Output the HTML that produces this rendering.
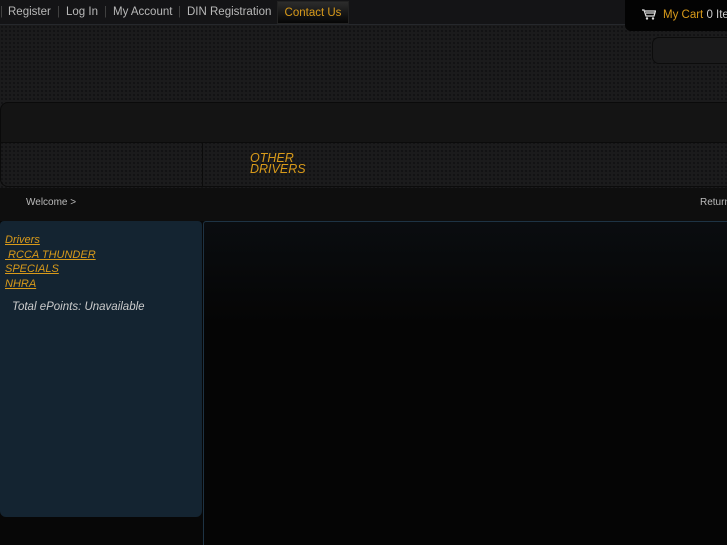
<!DOCTYPE html>
<html><head><style>
*{margin:0;padding:0;box-sizing:border-box}
html,body{width:727px;height:545px;overflow:hidden}
body{background:#070707;font-family:"Liberation Sans",sans-serif;position:relative}
.top{position:absolute;left:0;top:0;width:727px;height:25px;background:#141416;border-bottom:1px solid #26282c}
.nav{position:absolute;left:0;top:0;height:23px;font-size:11.5px;color:#b8b8b8;line-height:24px}
.nav span{position:absolute;white-space:nowrap}
.sep{color:#444}
.contact{position:absolute;left:277px;top:1px;width:72px;height:23px;background:linear-gradient(#2c2c2c,#050505);color:#d89a1a;font-size:11.5px;line-height:22px;text-align:center;border:1px solid #222}
.hdr{position:absolute;left:0;top:25px;width:727px;height:165px;background-color:#1b1b1c;background-image:radial-gradient(#121213 1px,transparent 1.2px);background-size:4px 4px}
.cart{position:absolute;left:625px;top:0;width:102px;height:31px;background:#030303;border-radius:0 0 0 6px;font-size:11.5px;line-height:30px;color:#d89a1a;padding-left:38px;white-space:nowrap;overflow:hidden}
.search{position:absolute;left:652px;top:37px;width:75px;height:27px;border:1px solid #0c0c0c;border-right:none;border-radius:7px 0 0 7px;background:#1a1a1b}
.bar1{position:absolute;left:0;top:102px;width:727px;height:41px;background:#141414;border:1px solid #0a0a0a;border-right:none;border-radius:8px 0 0 0}
.bar2{position:absolute;left:0;top:142px;width:727px;height:45px;border:1px solid #0b0b0b;border-right:none;border-radius:0 0 0 8px}
.vdiv{position:absolute;left:202px;top:142px;width:1px;height:45px;background:#0b0b0b}
.od{position:absolute;left:250px;top:153px;color:#d89a1a;font-size:12.5px;font-style:italic;line-height:11px}
.strip{position:absolute;left:0;top:188px;width:727px;height:33px;background:#0e0e0e;font-size:10px;color:#bbb;overflow:hidden}
.side{position:absolute;left:0;top:221px;width:202px;height:296px;background:#142431;border-radius:4px 4px 6px 6px}
.side a{display:block;color:#d89a1a;font-size:11px;font-style:italic;text-decoration:underline;line-height:14.5px;margin-left:5px}
.main{position:absolute;left:203px;top:221px;width:524px;height:324px;border:1px solid #1e3344;border-right:none;border-bottom:none;border-radius:3px 0 0 0;background:linear-gradient(#0a0d10 0px,#050505 100px)}
</style></head><body>
<div class="hdr"></div>
<div class="top"></div>
<div class="nav">
<span class="sep" style="left:0">|</span><span style="left:8px">Register</span>
<span class="sep" style="left:57px">|</span><span style="left:66px">Log In</span>
<span class="sep" style="left:104px">|</span><span style="left:113px">My Account</span>
<span class="sep" style="left:178px">|</span><span style="left:187px">DIN Registration</span>
</div>
<div class="contact">Contact Us</div>
<div class="cart"><svg style="position:absolute;left:17px;top:9px" width="14" height="11" viewBox="0 0 14 11"><path d="M0 1h2l2 6h8l1.5-5H3M4 4h9" fill="none" stroke="#ddd" stroke-width="1.3"/><circle cx="5" cy="9.5" r="1.2" fill="#ddd"/><circle cx="11" cy="9.5" r="1.2" fill="#ddd"/></svg>My Cart <span style="color:#ccc">0 Items</span></div>
<div class="search"></div>
<div class="bar1"></div>
<div class="bar2"></div>
<div class="vdiv"></div>
<div class="od">OTHER<br>DRIVERS</div>
<div class="strip"><span style="position:absolute;left:26px;top:9px">Welcome &gt;</span><span style="position:absolute;left:700px;top:9px;white-space:nowrap">Return</span></div>
<div class="side">
<div style="height:12px"></div>
<a>Drivers</a><a>&nbsp;RCCA THUNDER</a><a>SPECIALS</a><a>NHRA</a>
<div style="margin:10px 0 0 12px;color:#ccc;font-size:11.5px;font-style:italic">Total ePoints: Unavailable</div>
</div>
<div class="main"></div>
</body></html>
